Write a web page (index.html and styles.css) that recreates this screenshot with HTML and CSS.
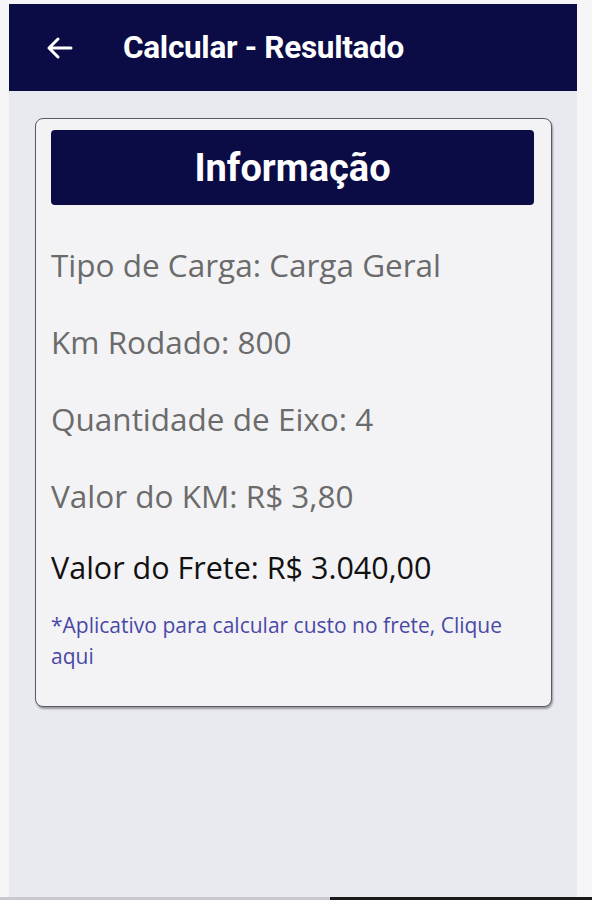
FILE: index.html
```html
<!DOCTYPE html>
<html lang="pt-BR">
<head>
    <meta charset="UTF-8">
    <meta name="viewport" content="width=device-width, initial-scale=1.0">
    <title>Calcular - Resultado</title>
    <link rel="stylesheet" href="styles.css">
</head>
<body>
    <div class="screen">
        <header class="topbar">
            <span class="back">
                <svg width="28" height="24" viewBox="0 0 28 24">
                    <path d="M26 12H4M13 3L4 12l9 9" fill="none" stroke="#ffffff" stroke-width="3" stroke-linecap="round" stroke-linejoin="round"/>
                </svg>
            </span>
            <h1 class="title">Calcular - Resultado</h1>
        </header>
        <div class="card">
            <div class="card-head">Informação</div>
            <div class="info">
                <div class="row">Tipo de Carga: Carga Geral</div>
                <div class="row">Km Rodado: 800</div>
                <div class="row">Quantidade de Eixo: 4</div>
                <div class="row">Valor do KM: R$ 3,80</div>
                <div class="row total">Valor do Frete: R$ 3.040,00</div>
            </div>
            <p class="note">*Aplicativo para calcular custo no frete, Clique aqui</p>
        </div>
    </div>
    <div class="bottom">
        <span class="bottom-left"></span>
        <span class="bottom-right"></span>
    </div>
</body>
</html>
```

FILE: styles.css
```css
html, body {
    margin: 0;
    padding: 0;
}
body {
    background-color: #f6f6f8;
    font-family: "Open Sans", "Noto Sans", sans-serif;
    height: 900px;
    overflow: hidden;
}
.screen {
    margin: 4px 15px 0 9px;
    height: 893px;
    background-color: #e9eaef;
    overflow: hidden;
}
.topbar {
    height: 87px;
    background-color: #0b0c45;
    display: flex;
    align-items: center;
}
.back {
    display: flex;
    margin-left: 36px;
    margin-right: 50px;
}
.title {
    margin: 0;
    color: #ffffff;
    font-family: Roboto, "Liberation Sans", sans-serif;
    font-size: 31.5px;
    font-weight: 700;
    letter-spacing: -0.3px;
}
.card {
    margin: 27px 0 0 26px;
    width: 517px;
    box-sizing: border-box;
    padding: 11px 17px 34px 15px;
    background-color: #f3f3f5;
    border: 1px solid #5a5a66;
    border-radius: 8px;
    box-shadow: 1px 2px 2px rgba(0, 0, 0, 0.35);
}
.card-head {
    height: 75px;
    background-color: #0b0c45;
    border-radius: 4px;
    color: #ffffff;
    font-family: Roboto, "Liberation Sans", sans-serif;
    font-size: 38px;
    font-weight: 700;
    display: flex;
    align-items: center;
    justify-content: center;
}
.info {
    margin-top: 21px;
}
.row {
    height: 77px;
    line-height: 77px;
    font-size: 31.5px;
    color: #6b6b6b;
    white-space: nowrap;
}
.row.total {
    height: 66px;
    line-height: 66px;
    font-size: 30.5px;
    color: #111111;
}
.note {
    margin: 10px 0 0;
    font-size: 21px;
    line-height: 31px;
    color: #4a49a6;
}
.bottom {
    display: flex;
    height: 3px;
}
.bottom-left {
    width: 330px;
    background-color: #c9c9cd;
}
.bottom-right {
    flex: 1;
    background-color: #1a1a1a;
}
```
